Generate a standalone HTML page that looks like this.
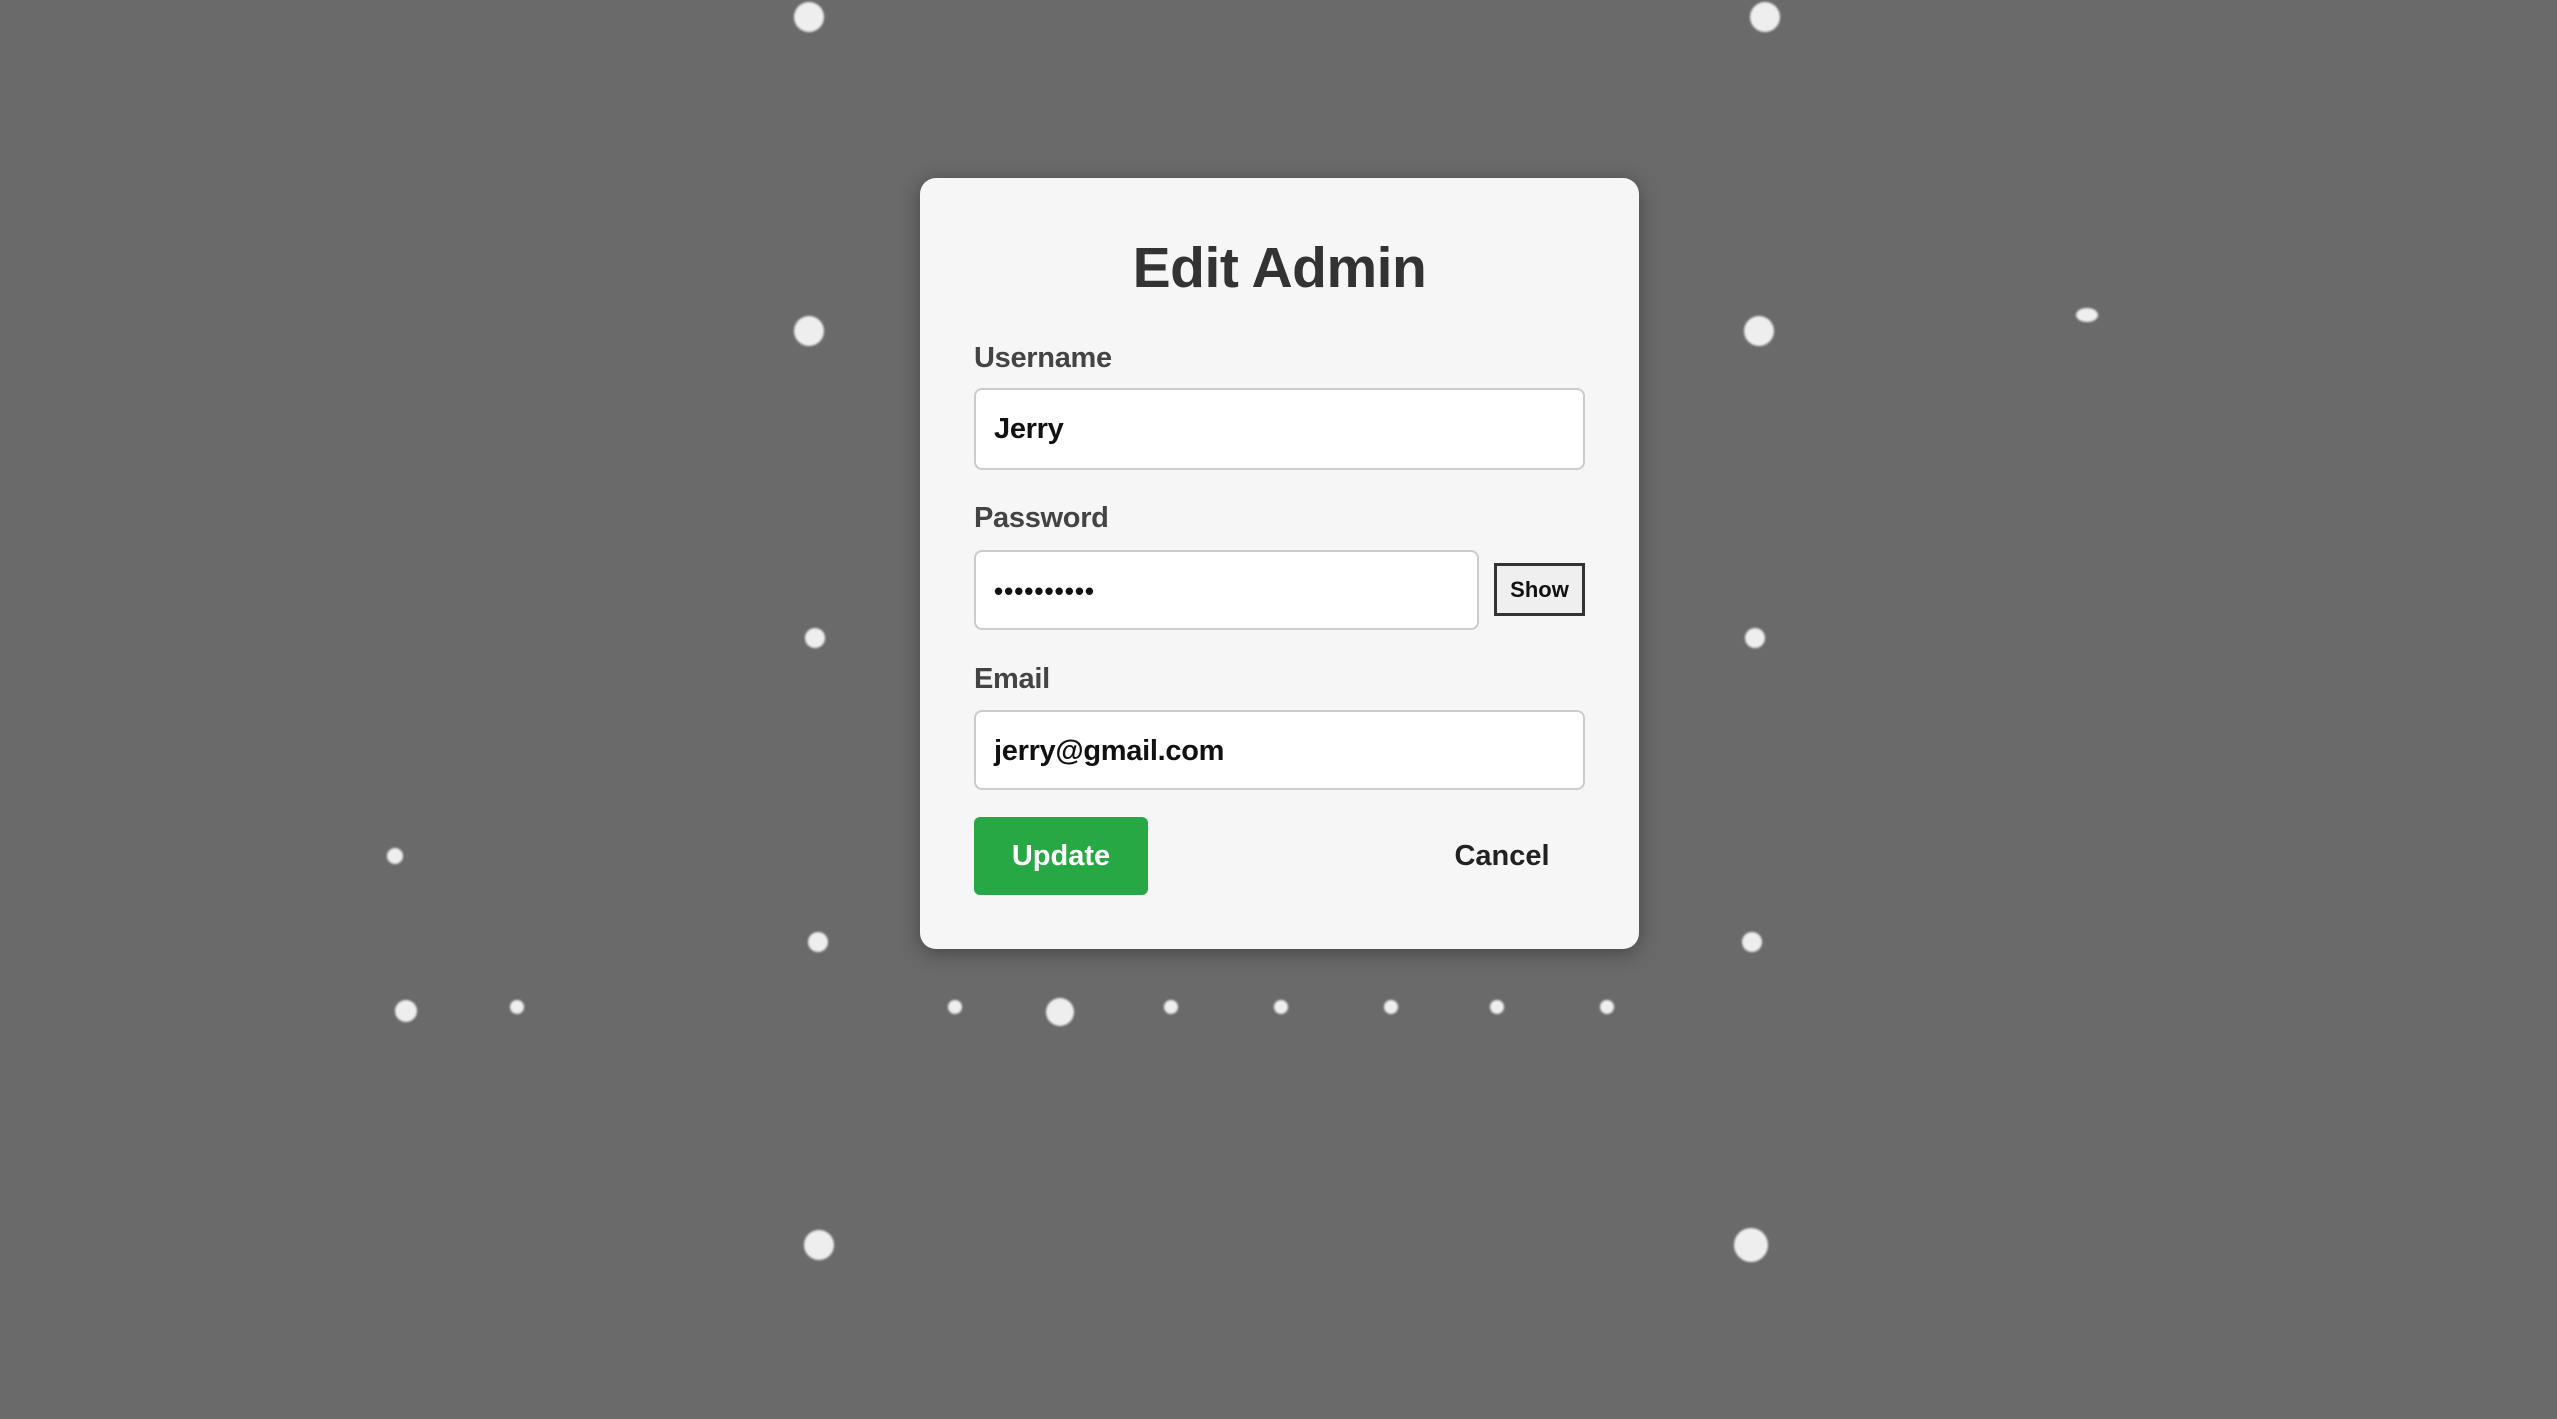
<!DOCTYPE html>
<html><head><meta charset="utf-8"><style>
html,body{margin:0;padding:0}
body{width:2557px;height:1419px;background:#6a6a6a;position:relative;overflow:hidden;font-family:"Liberation Sans",sans-serif}
.d{position:absolute;border-radius:50%;background:#eee;filter:blur(1px)}
.modal{position:absolute;left:920px;top:178px;width:719px;height:771px;background:#f6f6f6;border-radius:16px;box-shadow:0 4px 20px rgba(0,0,0,.35)}
.t{position:absolute;top:228px;text-align:center;font-size:57px;font-weight:bold;color:#333;line-height:80px;letter-spacing:-0.5px}
.l{position:absolute;left:974px;font-size:29px;font-weight:bold;color:#444;line-height:40px;letter-spacing:-0.3px}
.i{position:absolute;left:974px;background:#fff;border:2px solid #ccc;border-radius:8px;box-sizing:border-box;font-size:29px;font-weight:bold;color:#111;padding-left:18px;line-height:78px;letter-spacing:-0.3px}
</style></head><body>
<div class="d" style="left:794px;top:2px;width:30px;height:30px"></div>
<div class="d" style="left:1750px;top:2px;width:30px;height:30px"></div>
<div class="d" style="left:794px;top:316px;width:30px;height:30px"></div>
<div class="d" style="left:1744px;top:316px;width:30px;height:30px"></div>
<div class="d" style="left:804px;top:1230px;width:30px;height:30px"></div>
<div class="d" style="left:1734px;top:1228px;width:34px;height:34px"></div>
<div class="d" style="left:1046px;top:998px;width:28px;height:28px"></div>
<div class="d" style="left:395px;top:1000px;width:22px;height:22px"></div>
<div class="d" style="left:387px;top:848px;width:16px;height:16px"></div>
<div class="d" style="left:2076px;top:308px;width:22px;height:14px"></div>
<div class="d" style="left:510px;top:1000px;width:14px;height:14px"></div>
<div class="d" style="left:948px;top:1000px;width:14px;height:14px"></div>
<div class="d" style="left:1164px;top:1000px;width:14px;height:14px"></div>
<div class="d" style="left:1274px;top:1000px;width:14px;height:14px"></div>
<div class="d" style="left:1384px;top:1000px;width:14px;height:14px"></div>
<div class="d" style="left:1490px;top:1000px;width:14px;height:14px"></div>
<div class="d" style="left:1600px;top:1000px;width:14px;height:14px"></div>
<div class="d" style="left:805px;top:628px;width:20px;height:20px"></div>
<div class="d" style="left:1745px;top:628px;width:20px;height:20px"></div>
<div class="d" style="left:808px;top:932px;width:20px;height:20px"></div>
<div class="d" style="left:1742px;top:932px;width:20px;height:20px"></div>
<div class="modal"></div>
<div class="t" style="left:920px;width:719px">Edit Admin</div>
<div class="l" style="top:338px">Username</div>
<div class="i" style="top:388px;width:611px;height:82px">Jerry</div>
<div class="l" style="top:498px">Password</div>
<div class="i" style="top:550px;width:505px;height:80px;font-size:26px;letter-spacing:1px">••••••••••</div>
<div style="position:absolute;left:1494px;top:563px;width:91px;height:53px;box-sizing:border-box;border:3px solid #333;background:#efefef;font-size:22px;font-weight:bold;text-align:center;line-height:47px;color:#111">Show</div>
<div class="l" style="top:659px">Email</div>
<div class="i" style="top:710px;width:611px;height:80px">jerry@gmail.com</div>
<div style="position:absolute;left:974px;top:817px;width:174px;height:78px;background:#28a745;border-radius:6px;color:#fff;font-size:29px;font-weight:bold;text-align:center;line-height:78px">Update</div>
<div style="position:absolute;left:1422px;top:817px;width:160px;height:78px;color:#222;font-size:29px;font-weight:bold;text-align:center;line-height:78px">Cancel</div>
</body></html>
